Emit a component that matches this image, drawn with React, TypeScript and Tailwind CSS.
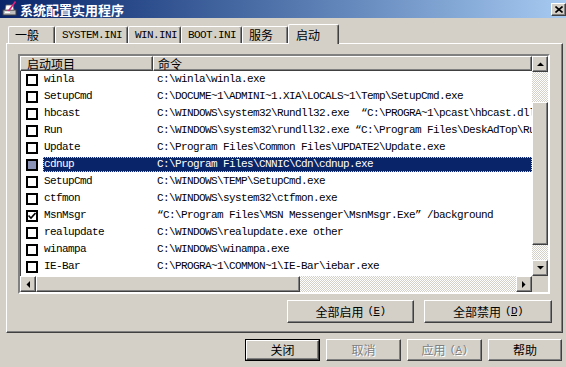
import React from "react";
import clsx from "clsx";

const cjk = "font-['Noto_Sans_CJK_SC',sans-serif]";
const mono = "font-['Liberation_Mono','Noto_Sans_CJK_SC',monospace] text-[11px] tracking-[-0.6px]";
const raised =
  "border-t border-l border-white border-r border-b border-r-[#404040] border-b-[#404040] shadow-[inset_-1px_-1px_0_#808080]";
const dither =
  "bg-[repeating-conic-gradient(#d4d0c8_0_25%,#ffffff_0_50%)] bg-[length:2px_2px]";

interface StartupItem {
  name: string;
  cmd: string;
  checked?: boolean;
  selected?: boolean;
}

const items: StartupItem[] = [
  { name: "winla", cmd: "c:\\winla\\winla.exe" },
  { name: "SetupCmd", cmd: "C:\\DOCUME~1\\ADMINI~1.XIA\\LOCALS~1\\Temp\\SetupCmd.exe" },
  { name: "hbcast", cmd: "C:\\WINDOWS\\system32\\Rundll32.exe  \u201cC:\\PROGRA~1\\pcast\\hbcast.dll\u201d" },
  { name: "Run", cmd: "C:\\WINDOWS\\system32\\rundll32.exe \u201cC:\\Program Files\\DeskAdTop\\Run.dll\u201d" },
  { name: "Update", cmd: "C:\\Program Files\\Common Files\\UPDATE2\\Update.exe" },
  { name: "cdnup", cmd: "C:\\Program Files\\CNNIC\\Cdn\\cdnup.exe", selected: true },
  { name: "SetupCmd", cmd: "C:\\WINDOWS\\TEMP\\SetupCmd.exe" },
  { name: "ctfmon", cmd: "C:\\WINDOWS\\system32\\ctfmon.exe" },
  { name: "MsnMsgr", cmd: "\u201cC:\\Program Files\\MSN Messenger\\MsnMsgr.Exe\u201d /background", checked: true },
  { name: "realupdate", cmd: "C:\\WINDOWS\\realupdate.exe other" },
  { name: "winampa", cmd: "C:\\WINDOWS\\winampa.exe" },
  { name: "IE-Bar", cmd: "C:\\PROGRA~1\\COMMON~1\\IE-Bar\\iebar.exe" },
];

const tabs = [
  { label: "一般", w: "w-[47px]", latin: false },
  { label: "SYSTEM.INI", w: "w-[73px]", latin: true },
  { label: "WIN.INI", w: "w-[53px]", latin: true },
  { label: "BOOT.INI", w: "w-[61px]", latin: true },
  { label: "服务", w: "w-[46px]", latin: false },
];

function Arrow({ dir }: { dir: "up" | "down" | "left" | "right" }) {
  const pts = {
    up: "0,4 7,4 3.5,0.5",
    down: "0,0 7,0 3.5,3.5",
    left: "4,0 4,7 0.5,3.5",
    right: "0,0 0,7 3.5,3.5",
  }[dir];
  const vertical = dir === "up" || dir === "down";
  return (
    <svg width={vertical ? 7 : 4} height={vertical ? 4 : 7} viewBox={vertical ? "0 0 7 4" : "0 0 4 7"}>
      <polygon points={pts} fill="#000" />
    </svg>
  );
}

function ScrollBtn({ dir }: { dir: "up" | "down" | "left" | "right" }) {
  return (
    <div className={clsx("flex h-[16px] w-[16px] flex-none items-center justify-center bg-[#d4d0c8]", raised)}>
      <Arrow dir={dir} />
    </div>
  );
}

function CheckBox({ checked, selected }: { checked?: boolean; selected?: boolean }) {
  return (
    <div
      className={clsx(
        "flex h-[12px] w-[12px] items-center justify-center border-2 border-black",
        selected ? "bg-[#8b93b6]" : "bg-white"
      )}
    >
      {checked && (
        <svg width="8" height="8" viewBox="0 0 8 8">
          <path d="M0.5 3.5 L3 6 L7.5 1" stroke="#000" strokeWidth="1.6" fill="none" />
        </svg>
      )}
    </div>
  );
}

function Row({ item }: { item: StartupItem }) {
  return (
    <div className="flex h-[17px] flex-none items-center">
      <div className="flex w-[23px] flex-none pl-[6px]">
        <CheckBox checked={item.checked} selected={item.selected} />
      </div>
      <div
        className={clsx(
          "flex h-[15px] flex-1 items-center whitespace-pre",
          item.selected ? "border border-dotted border-[#d4d0c8] bg-[#0a246a] text-white" : "border border-transparent text-black"
        )}
      >
        <span className="w-[109px] flex-none">{item.name}</span>
        <span className="pl-[4px]">{item.cmd}</span>
      </div>
    </div>
  );
}

function Button({ label, hotkey, disabled, isDefault, w }: { label: string; hotkey?: string; disabled?: boolean; isDefault?: boolean; w: string }) {
  const inner = (
    <div
      className={clsx(
        "flex h-full w-full items-center justify-center bg-[#d4d0c8] text-[12px]",
        raised,
        disabled ? "text-[#808080] [text-shadow:1px_1px_0_#ffffff]" : "text-black"
      )}
    >
      <span className={cjk}>{label}</span>
      {hotkey && (
        <span className="ml-[4px] font-['Liberation_Mono',monospace] text-[11px] tracking-[-0.6px]">
          (<u>{hotkey}</u>)
        </span>
      )}
    </div>
  );
  return (
    <div className={clsx("flex-none", w, isDefault && "border border-black")}>{inner}</div>
  );
}

export default function App() {
  return (
    <div className={clsx("flex h-[367px] w-[566px] flex-col overflow-hidden bg-[#d4d0c8]", cjk)}>
      {/* title bar */}
      <div className="flex h-[18px] flex-none items-center bg-linear-to-r from-[#0a246a] to-[#a6caf0]">
        <svg width="16" height="16" viewBox="0 0 16 16" className="ml-[2px] flex-none">
          <rect x="1" y="9" width="13" height="5" fill="#c0c0c0" stroke="#404040" />
          <rect x="3" y="10.5" width="5" height="1.5" fill="#ffffff" />
          <polygon points="4,4 11,4 12,9 3,9" fill="#ffffff" stroke="#606060" strokeWidth="0.8" />
          <line x1="13.5" y1="0.5" x2="6.5" y2="10" stroke="#e0207a" strokeWidth="1.6" />
        </svg>
        <span className="ml-[2px] text-[13px] font-bold leading-none text-white">系统配置实用程序</span>
        <div className="flex-1" />
        <div className={clsx("mt-[1px] flex h-[13px] w-[15px] flex-none items-center justify-center bg-[#d4d0c8]", raised)}>
          <svg width="8" height="7" viewBox="0 0 8 7">
            <path d="M0.5 0.5 L7.5 6.5 M7.5 0.5 L0.5 6.5" stroke="#000" strokeWidth="1.6" />
          </svg>
        </div>
      </div>

      {/* tabs */}
      <div className="ml-[8px] mt-[6px] flex h-[19px] flex-none items-end">
        {tabs.map((t) => (
          <div
            key={t.label}
            className={clsx(
              "flex h-[17px] flex-none items-center rounded-tl-[2px] rounded-tr-[2px] border-l border-t border-white border-r-[1px] border-r-[#404040] pl-[6px] text-black shadow-[inset_-1px_0_0_#808080]",
              t.w
            )}
          >
            <span className={t.latin ? mono : "text-[12px] leading-none"}>{t.label}</span>
          </div>
        ))}
        <div className="relative z-10 -mb-px flex h-[20px] w-[51px] flex-none items-center rounded-tl-[2px] rounded-tr-[2px] border-l border-t border-r border-white border-r-[#404040] bg-[#d4d0c8] pl-[7px] shadow-[inset_-1px_0_0_#808080]">
          <span className="text-[12px] leading-none text-black">启动</span>
        </div>
      </div>

      {/* tab panel */}
      <div className="ml-[6px] flex h-[290px] w-[557px] flex-none flex-col border-l border-t border-white border-r border-b border-r-[#404040] border-b-[#404040] pl-[11px] pr-[10px] pt-[10px] shadow-[inset_-1px_-1px_0_#808080]">
        {/* list view */}
        <div className="flex h-[240px] w-[532px] flex-none border-2 border-t-[#808080] border-l-[#808080] border-r-white border-b-white">
          <div className="flex flex-1 flex-col overflow-hidden bg-white shadow-[inset_1px_1px_0_#404040]">
            <div className="flex h-[15px] flex-none bg-[#d4d0c8] text-[12px] leading-none text-black">
              <div className={clsx("flex w-[133px] flex-none items-center pl-[6px]", raised)}>启动项目</div>
              <div className={clsx("flex flex-1 items-center pl-[4px]", raised)}>命令</div>
            </div>
            <div className={clsx("flex flex-1 flex-col overflow-hidden", mono)}>
              {items.map((it, i) => (
                <Row key={i} item={it} />
              ))}
            </div>
            <div className="flex h-[16px] flex-none">
              <ScrollBtn dir="left" />
              <div className={clsx("w-[264px] flex-none bg-[#d4d0c8]", raised)} />
              <div className={clsx("flex-1", dither)} />
              <ScrollBtn dir="right" />
            </div>
          </div>
          <div className="flex w-[16px] flex-none flex-col">
            <ScrollBtn dir="up" />
            <div className={clsx("h-[30px] flex-none", dither)} />
            <div className={clsx("h-[143px] flex-none bg-[#d4d0c8]", raised)} />
            <div className={clsx("flex-1", dither)} />
            <ScrollBtn dir="down" />
            <div className="h-[16px] flex-none bg-[#d4d0c8]" />
          </div>
        </div>

        <div className="mt-[6px] flex justify-end gap-[10px]">
          <div className="h-[23px]">
            <Button label="全部启用" hotkey="E" w="w-[127px] h-full" />
          </div>
          <div className="h-[23px]">
            <Button label="全部禁用" hotkey="D" w="w-[128px] h-full" />
          </div>
        </div>
      </div>

      {/* dialog buttons */}
      <div className="mt-[6px] flex h-[22px] flex-none justify-end gap-[6px] pr-[4px]">
        <Button label="关闭" isDefault w="w-[75px] h-full" />
        <Button label="取消" disabled w="w-[75px] h-full" />
        <Button label="应用" hotkey="A" disabled w="w-[75px] h-full" />
        <Button label="帮助" w="w-[74px] h-full" />
      </div>
    </div>
  );
}
